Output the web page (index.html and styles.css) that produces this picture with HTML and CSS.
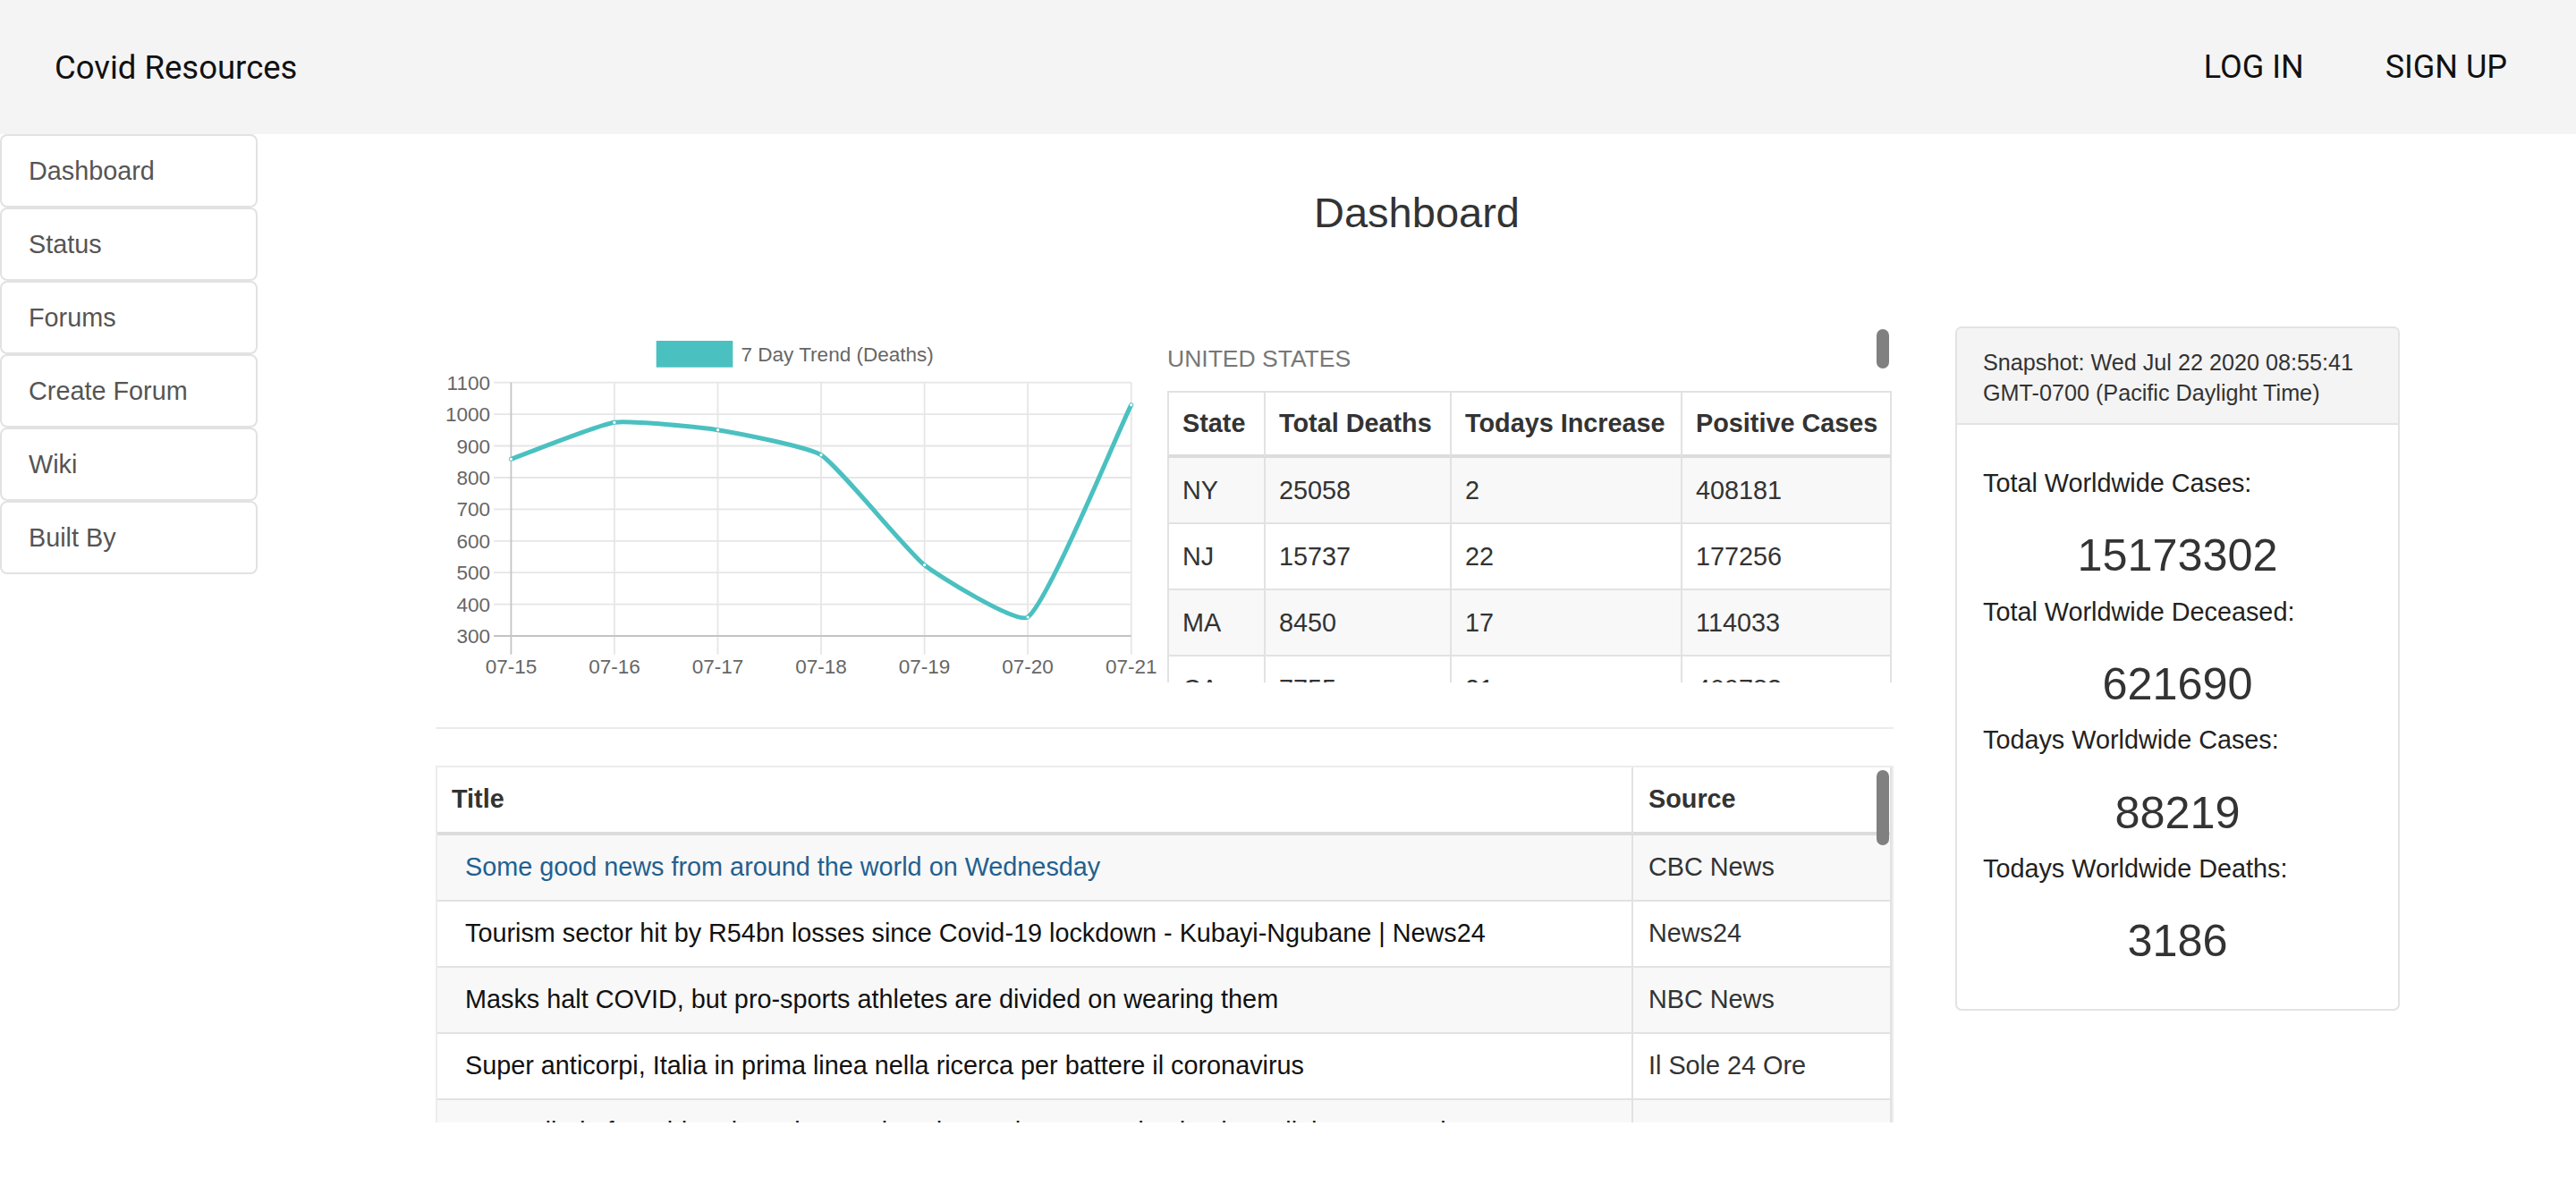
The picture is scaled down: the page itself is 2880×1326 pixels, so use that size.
FILE: index.html
```html
<!DOCTYPE html>
<html lang="en">
<head>
<meta charset="utf-8">
<title>Covid Resources</title>
<link rel="stylesheet" href="styles.css">
</head>
<body>
<header class="appbar">
  <div class="brand">Covid Resources</div>
  <nav class="auth">
    <a class="auth-btn" href="#">LOG IN</a>
    <a class="auth-btn" href="#">SIGN UP</a>
  </nav>
</header>
<div class="layout">
  <aside class="sidebar">
    <a class="nav-item" href="#">Dashboard</a>
    <a class="nav-item" href="#">Status</a>
    <a class="nav-item" href="#">Forums</a>
    <a class="nav-item" href="#">Create Forum</a>
    <a class="nav-item" href="#">Wiki</a>
    <a class="nav-item" href="#">Built By</a>
  </aside>
  <main class="main">
    <h1 class="page-title">Dashboard</h1>
    <div class="dash-row">
      <section class="left-col">
        <div class="top-row">
          <div class="chart">
            <svg class="chart-svg" width="815" height="398" viewBox="0 0 815 398">
              <rect x="246.7" y="16" width="85.6" height="29.7" fill="#4bc0c0"/>
              <text class="legend-text" x="341.6" y="39">7 Day Trend (Deaths)</text>
              <g class="grid">
                <line x1="65" y1="62.7" x2="777.7" y2="62.7"/>
                <line x1="65" y1="98.1" x2="777.7" y2="98.1"/>
                <line x1="65" y1="133.5" x2="777.7" y2="133.5"/>
                <line x1="65" y1="169.0" x2="777.7" y2="169.0"/>
                <line x1="65" y1="204.4" x2="777.7" y2="204.4"/>
                <line x1="65" y1="239.8" x2="777.7" y2="239.8"/>
                <line x1="65" y1="275.2" x2="777.7" y2="275.2"/>
                <line x1="65" y1="310.6" x2="777.7" y2="310.6"/>
                <line x1="199.9" y1="62.7" x2="199.9" y2="366.7"/>
                <line x1="315.5" y1="62.7" x2="315.5" y2="366.7"/>
                <line x1="431.0" y1="62.7" x2="431.0" y2="366.7"/>
                <line x1="546.6" y1="62.7" x2="546.6" y2="366.7"/>
                <line x1="662.1" y1="62.7" x2="662.1" y2="366.7"/>
                <line x1="777.7" y1="62.7" x2="777.7" y2="366.7"/>
              </g>
              <g class="axis">
                <line x1="65" y1="346" x2="777.7" y2="346"/>
                <line x1="84.4" y1="62.7" x2="84.4" y2="366.7"/>
              </g>
              <g class="ylabels">
                <text x="61" y="70.7">1100</text>
                <text x="61" y="106.1">1000</text>
                <text x="61" y="141.5">900</text>
                <text x="61" y="177.0">800</text>
                <text x="61" y="212.4">700</text>
                <text x="61" y="247.8">600</text>
                <text x="61" y="283.2">500</text>
                <text x="61" y="318.6">400</text>
                <text x="61" y="354.0">300</text>
              </g>
              <g class="xlabels">
                <text x="84.4" y="388">07-15</text>
                <text x="199.9" y="388">07-16</text>
                <text x="315.5" y="388">07-17</text>
                <text x="431.0" y="388">07-18</text>
                <text x="546.6" y="388">07-19</text>
                <text x="662.1" y="388">07-20</text>
                <text x="777.7" y="388">07-21</text>
              </g>
              <path class="trend" d="M84.4,148.3 C101.7,142.2 182.1,109.8 199.9,107.3 C216.7,104.9 298.4,113.0 315.5,115.7 C333.0,118.5 416.7,134.3 431,143.7 C451.3,157.0 527.0,251.3 546.6,266.7 C561.6,278.5 650.7,333.8 662.1,325 C685.3,307.0 760.4,123.3 777.7,87.7"/>
              <g class="pts">
                <circle cx="84.4" cy="148.3" r="1.6"/>
                <circle cx="199.9" cy="107.3" r="1.6"/>
                <circle cx="315.5" cy="115.7" r="1.6"/>
                <circle cx="431" cy="143.7" r="1.6"/>
                <circle cx="546.6" cy="266.7" r="1.6"/>
                <circle cx="662.1" cy="325" r="1.6"/>
                <circle cx="777.7" cy="87.7" r="1.6"/>
              </g>
            </svg>
          </div>
          <div class="us-panel">
            <div class="us-label">UNITED STATES</div>
            <table class="us-table">
              <thead>
                <tr><th class="c-state">State</th><th class="c-deaths">Total Deaths</th><th class="c-inc">Todays Increase</th><th class="c-pos">Positive Cases</th></tr>
              </thead>
              <tbody>
                <tr><td>NY</td><td>25058</td><td>2</td><td>408181</td></tr>
                <tr><td>NJ</td><td>15737</td><td>22</td><td>177256</td></tr>
                <tr><td>MA</td><td>8450</td><td>17</td><td>114033</td></tr>
                <tr><td>CA</td><td>7755</td><td>21</td><td>409783</td></tr>
                <tr><td>IL</td><td>7446</td><td>20</td><td>165301</td></tr>
              </tbody>
            </table>
            <div class="thumb thumb-us"></div>
          </div>
        </div>
        <hr class="divider">
        <div class="news">
          <table class="news-table">
            <thead>
              <tr><th class="n-title">Title</th><th class="n-src">Source</th></tr>
            </thead>
            <tbody>
              <tr><td class="t"><a class="news-link" href="#">Some good news from around the world on Wednesday</a></td><td class="s">CBC News</td></tr>
              <tr><td class="t">Tourism sector hit by R54bn losses since Covid-19 lockdown - Kubayi-Ngubane | News24</td><td class="s">News24</td></tr>
              <tr><td class="t">Masks halt COVID, but pro-sports athletes are divided on wearing them</td><td class="s">NBC News</td></tr>
              <tr><td class="t">Super anticorpi, Italia in prima linea nella ricerca per battere il coronavirus</td><td class="s">Il Sole 24 Ore</td></tr>
              <tr><td class="t">1,000 died of Covid-19 in Latin America, the US has more deaths than all the 6 countries</td><td class="s">Reuters</td></tr>
              <tr><td class="t">Coronavirus live updates from around the world</td><td class="s">CNN</td></tr>
            </tbody>
          </table>
          <div class="thumb thumb-news"></div>
        </div>
      </section>
      <aside class="stats-card">
        <div class="card-header">Snapshot: Wed Jul 22 2020 08:55:41<br>GMT-0700 (Pacific Daylight Time)</div>
        <div class="card-body">
          <p class="stat-label">Total Worldwide Cases:</p>
          <h3 class="stat-num">15173302</h3>
          <p class="stat-label">Total Worldwide Deceased:</p>
          <h3 class="stat-num">621690</h3>
          <p class="stat-label">Todays Worldwide Cases:</p>
          <h3 class="stat-num">88219</h3>
          <p class="stat-label">Todays Worldwide Deaths:</p>
          <h3 class="stat-num">3186</h3>
        </div>
      </aside>
    </div>
  </main>
</div>
</body>
</html>
```

FILE: styles.css
```css
html, body {
  margin: 0;
  padding: 0;
}
body {
  width: 2880px;
  height: 1326px;
  overflow: hidden;
  background: #fff;
  font-family: "Liberation Sans", Arial, Helvetica, sans-serif;
  color: #333;
}
a { text-decoration: none; }

/* App bar */
.appbar {
  height: 150px;
  box-sizing: border-box;
  display: flex;
  align-items: center;
  background: #f4f4f4;
  padding: 0 77px 0 61px;
  font-family: Roboto, "Liberation Sans", sans-serif;
  color: #111;
}
.brand {
  font-size: 36.5px;
  font-weight: 400;
}
.auth {
  margin-left: auto;
  display: flex;
  gap: 91px;
}
.auth-btn {
  font-size: 36px;
  color: #111;
  font-family: Roboto, "Liberation Sans", sans-serif;
}

/* Layout */
.layout {
  display: flex;
  align-items: flex-start;
}
.sidebar {
  width: 288px;
  flex: none;
  display: flex;
  flex-direction: column;
}
.nav-item {
  height: 82px;
  box-sizing: border-box;
  display: flex;
  align-items: center;
  padding: 0 30px;
  border: 2px solid #e2e2e2;
  border-radius: 8px;
  background: #fff;
  color: #555;
  font-size: 28.8px;
}

.main {
  flex: 1;
  min-width: 0;
}
.page-title {
  margin: 60px 0 100px;
  font-size: 47px;
  line-height: 55px;
  font-weight: 400;
  color: #333;
  text-align: center;
}
.dash-row {
  display: flex;
  align-items: flex-start;
  gap: 69px;
  padding: 0 197px 0 199px;
}
.left-col {
  width: 1630px;
  flex: none;
}
.top-row {
  display: flex;
  height: 398px;
}
.chart {
  width: 815px;
  height: 398px;
  flex: none;
}
.chart-svg { display: block; }
.chart-svg text {
  font-family: "Liberation Sans", Arial, sans-serif;
  font-size: 22.5px;
  fill: #666;
}
.chart-svg .ylabels text { text-anchor: end; }
.chart-svg .xlabels text { text-anchor: middle; }
.chart-svg .grid line { stroke: #e6e6e6; stroke-width: 1.8; }
.chart-svg .axis line { stroke: #c4c4c4; stroke-width: 1.8; }
.chart-svg .trend {
  fill: none;
  stroke: #4bc0c0;
  stroke-width: 5;
  stroke-linejoin: round;
  stroke-linecap: round;
}
.chart-svg .pts circle { fill: #fff; }

/* US panel */
.us-panel {
  position: relative;
  width: 812px;
  margin-left: 3px;
  height: 398px;
  overflow: hidden;
  flex: none;
}
.us-label {
  padding-top: 16px;
  margin-bottom: 16px;
  font-size: 26.5px;
  line-height: 40px;
  color: #777;
}
.us-table {
  width: 810px;
  table-layout: fixed;
  border-collapse: separate;
  border-spacing: 0;
  border-top: 2px solid #e2e2e2;
  border-right: 2px solid #e2e2e2;
  font-size: 28.8px;
  line-height: 43.2px;
}
.us-table th, .us-table td {
  box-sizing: border-box;
  text-align: left;
  border-left: 2px solid #e2e2e2;
  padding: 14.4px 15px;
  color: #333;
  white-space: nowrap;
}
.us-table th {
  padding-top: 13px;
  padding-bottom: 13px;
  font-weight: 700;
  border-bottom: 4px solid #dcdcdc;
}
.us-table tbody tr + tr td { border-top: 2px solid #e2e2e2; }
.us-table tbody tr:nth-child(odd) td { background: #f8f8f8; }
.c-state { width: 108px; }
.c-deaths { width: 208px; }
.c-inc { width: 258px; }
.c-pos { width: 234px; }

.thumb {
  position: absolute;
  width: 14px;
  border-radius: 7px;
  background: #808080;
}
.thumb-us {
  top: 3px;
  right: 5px;
  height: 44px;
}

.divider {
  margin: 50px 0 41px;
  border: 0;
  border-top: 2px solid #ebebeb;
  height: 0;
}

/* News */
.news {
  position: relative;
  height: 399px;
  box-sizing: border-box;
  border: 2px solid #ececec;
  border-bottom: 0;
  overflow: hidden;
}
.news-table {
  width: 1626px;
  table-layout: fixed;
  border-collapse: separate;
  border-spacing: 0;
  border-right: 2px solid #e2e2e2;
  font-size: 28.8px;
  line-height: 43.2px;
}
.news-table th, .news-table td {
  box-sizing: border-box;
  text-align: left;
  padding: 14.4px 17px;
  white-space: nowrap;
  overflow: hidden;
}
.news-table th {
  font-weight: 700;
  color: #333;
  border-bottom: 4px solid #dcdcdc;
}
.news-table .n-title { width: 1335px; padding-left: 16px; }
.news-table .n-src { width: 289px; border-left: 2px solid #e2e2e2; }
.news-table td.t { padding-left: 31px; color: #111; }
.news-table td.s { border-left: 2px solid #e2e2e2; color: #333; }
.news-table tbody tr + tr td { border-top: 2px solid #e2e2e2; }
.news-table tbody tr:nth-child(odd) td { background: #f8f8f8; }
.news-link { color: #22608f; }
.thumb-news {
  top: 3px;
  right: 3px;
  height: 84px;
}

/* Stats card */
.stats-card {
  width: 497px;
  flex: none;
  box-sizing: border-box;
  border: 2px solid #e3e3e3;
  border-radius: 7px;
  overflow: hidden;
}
.card-header {
  background: #f4f4f4;
  border-bottom: 2px solid #e3e3e3;
  padding: 21px 29px 17px;
  font-size: 25.2px;
  line-height: 34px;
  color: #333;
}
.card-body {
  padding: 44px 29px 34px;
}
.stat-label {
  margin: 0 0 29px;
  font-size: 28.8px;
  line-height: 43.2px;
  color: #222;
}
.stat-num {
  margin: 0 0 11px;
  font-size: 50.4px;
  line-height: 60.5px;
  font-weight: 400;
  text-align: center;
  color: #333;
}
```
